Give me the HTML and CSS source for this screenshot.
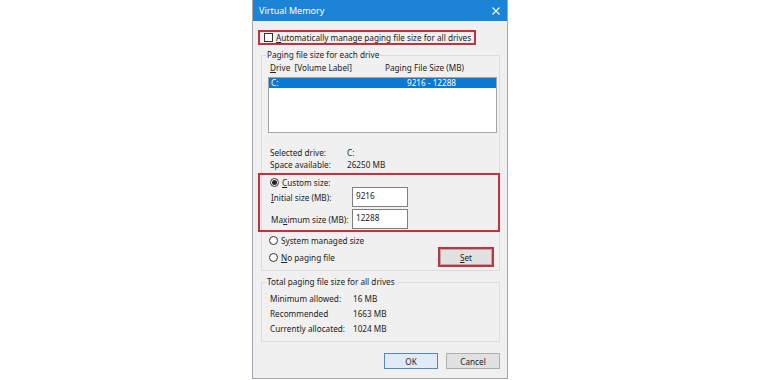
FILE: index.html
```html
<!DOCTYPE html>
<html lang="en">
  <head>
    <meta charset="UTF-8">
    <title>Virtual Memory</title>
    <link rel="stylesheet" href="styles.css">
  </head>
  <body>
    <div class="dialog">
        <div class="titlebar">
            <span class="title">Virtual Memory</span>
            <svg class="close" width="8" height="8" viewBox="0 0 8 8">
                <path d="M0.5 0.5L7.5 7.5M7.5 0.5L0.5 7.5" stroke="#fff" stroke-width="1.1" fill="none"/>
            </svg>
        </div>

        <div class="mark auto-row">
            <span class="checkbox"></span>
            <span><u>A</u>utomatically manage paging file size for all drives</span>
        </div>

        <fieldset class="group drives">
            <legend>Paging file size for each drive</legend>
            <div class="list-head">
                <span class="head-drive"><u>D</u>rive&nbsp; [Volume Label]</span>
                <span>Paging File Size (MB)</span>
            </div>
            <div class="listbox">
                <div class="list-row selected">
                    <span class="row-drive">C:</span>
                    <span>9216 - 12288</span>
                </div>
            </div>

            <div class="info">
                <div class="pair"><span class="key">Selected drive:</span><span>C:</span></div>
                <div class="pair"><span class="key">Space available:</span><span>26250 MB</span></div>
            </div>

            <div class="mark custom">
                <div class="radio-row">
                    <span class="radio checked"></span>
                    <span><u>C</u>ustom size:</span>
                </div>
                <div class="size-row">
                    <span class="size-label"><u>I</u>nitial size (MB):</span>
                    <input class="textbox" type="text" value="9216">
                </div>
                <div class="size-row">
                    <span class="size-label">Ma<u>x</u>imum size (MB):</span>
                    <input class="textbox" type="text" value="12288">
                </div>
            </div>

            <div class="radio-row system">
                <span class="radio"></span>
                <span>S<u>y</u>stem managed size</span>
            </div>
            <div class="set-row">
                <div class="radio-row">
                    <span class="radio"></span>
                    <span><u>N</u>o paging file</span>
                </div>
                <div class="mark set-mark">
                    <button class="button set"><u>S</u>et</button>
                </div>
            </div>
        </fieldset>

        <fieldset class="group totals">
            <legend>Total paging file size for all drives</legend>
            <div class="total"><span class="total-key">Minimum allowed:</span><span>16 MB</span></div>
            <div class="total"><span class="total-key">Recommended</span><span>1663 MB</span></div>
            <div class="total"><span class="total-key">Currently allocated:</span><span>1024 MB</span></div>
        </fieldset>

        <div class="actions">
            <button class="button default">OK</button>
            <button class="button">Cancel</button>
        </div>
    </div>
  </body>
</html>
```

FILE: styles.css
```css
body {
    margin: 0;
    width: 760px;
    height: 380px;
    background: #fff;
    font-family: "Noto Sans", "Open Sans", sans-serif;
    font-size: 8.2px;
    color: #222;
    white-space: nowrap;
    overflow: hidden;
}

.dialog {
    box-sizing: border-box;
    width: 256px;
    height: 379px;
    margin-left: 252px;
    border: 1px solid #a2a9b0;
    border-top: 0;
    background: #f0f0f0;
}

.titlebar {
    height: 21px;
    display: flex;
    align-items: center;
    justify-content: space-between;
    padding: 0 7px 0 6px;
    background: #1c84d6;
    color: #fff;
}

.title {
    font-size: 9px;
}

/* red annotation boxes */
.mark {
    box-sizing: border-box;
    border: 2px solid #c0323f;
}

.auto-row {
    width: 218px;
    height: 15px;
    margin: 9px 0 0 5px;
    display: flex;
    align-items: center;
    gap: 3px;
    padding-left: 4px;
}

.checkbox {
    box-sizing: border-box;
    width: 9px;
    height: 9px;
    border: 1px solid #333;
    background: #fff;
}

.group {
    margin: 4px 7px 0 8px;
    padding: 0 2px 3px 6px;
    border: 1px solid #dcdcdc;
    min-width: 0;
}

.group legend {
    padding: 0 1px;
    margin-left: -2px;
    line-height: 12px;
}

.list-head {
    display: flex;
    height: 12px;
    line-height: 12px;
    margin-top: 1px;
    padding-left: 2px;
}

.head-drive {
    width: 115px;
}

.listbox {
    box-sizing: border-box;
    height: 56px;
    margin-top: 3px;
    border: 1px solid #a4a4a4;
    background: #fff;
}

.list-row {
    display: flex;
    height: 10px;
    line-height: 10px;
    padding-left: 2px;
}

.list-row.selected {
    background: #0b78d2;
    color: #fff;
}

.row-drive {
    width: 136px;
}

.info {
    margin-top: 14px;
    padding-left: 2px;
}

.pair {
    display: flex;
    height: 12px;
    line-height: 12px;
}

.key {
    width: 77px;
}

.custom {
    margin: 2px -3px 0 -10px;
    padding: 2px 0 1px 10px;
}

.radio-row {
    display: flex;
    align-items: center;
    gap: 3px;
    height: 10px;
}

.radio {
    box-sizing: border-box;
    width: 9px;
    height: 9px;
    border: 1px solid #333;
    border-radius: 50%;
    background: #fff;
    display: flex;
    align-items: center;
    justify-content: center;
}

.radio.checked::before {
    content: "";
    width: 5px;
    height: 5px;
    border-radius: 50%;
    background: #222;
}

.size-row {
    display: flex;
    align-items: center;
    height: 20px;
    padding-left: 1px;
}

.size-row + .size-row {
    margin-top: 2px;
}

.size-label {
    width: 81px;
}

.textbox {
    box-sizing: border-box;
    width: 56px;
    height: 20px;
    margin: 0;
    padding: 0 3px 4px;
    border: 1px solid #7f7f7f;
    background: #fff;
    font: inherit;
    color: inherit;
    outline: none;
}

.system {
    margin-top: 2px;
    height: 12px;
    padding-left: 1px;
}

.set-row {
    display: flex;
    align-items: center;
    justify-content: space-between;
    height: 20px;
    margin-top: 1px;
    padding-left: 1px;
}

.set-mark {
    width: 56px;
    height: 20px;
    margin-right: 3px;
}

.button {
    box-sizing: border-box;
    height: 16px;
    padding: 0;
    border: 1px solid #adadad;
    background: #e1e1e1;
    font: inherit;
    color: inherit;
}

.set {
    width: 52px;
    display: block;
}

.totals {
    margin-top: 5px;
    padding-top: 3px;
    padding-bottom: 5px;
}

.total {
    display: flex;
    height: 15px;
    line-height: 15px;
    padding-left: 2px;
}

.total-key {
    width: 83px;
}

.actions {
    display: flex;
    justify-content: flex-end;
    gap: 8px;
    margin: 11px 7px 0 0;
}

.actions .button {
    width: 54px;
}

.button.default {
    border-color: #4f89bf;
    background: #e0ebf5;
}
```
